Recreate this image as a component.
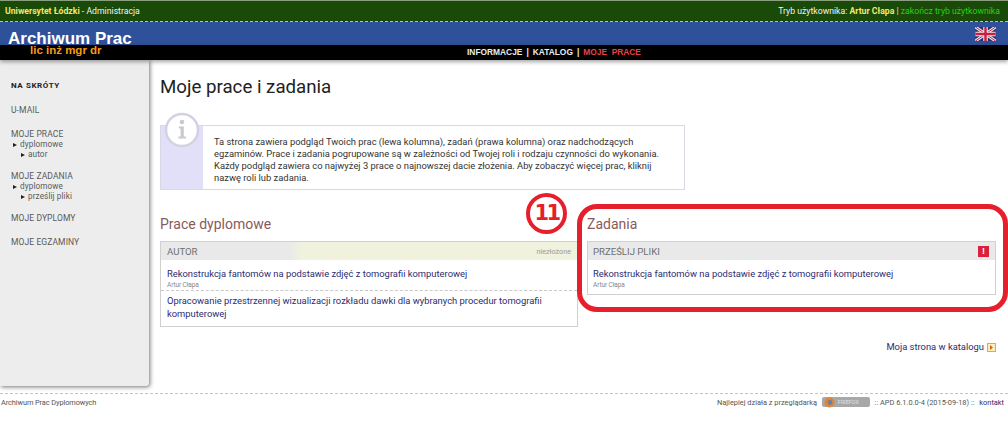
<div class="page">
  <header>
    <div class="topbar">
      <div><b class="uni">Uniwersytet Łódzki</b> - Administracja</div>
      <div>Tryb użytkownika: <b class="uni">Artur Cłapa</b> <span class="sep">|</span> <span class="green">zakończ tryb użytkownika</span></div>
    </div>
    <div class="blue">
      <span class="brand">Archiwum Prac</span>
      <svg class="flag" viewBox="0 0 20 14" width="21" height="14" aria-label="English">
        <rect width="20" height="14" rx="1.5" fill="#2b2f6e"/>
        <path d="M0 0L20 14M20 0L0 14" stroke="#e8e8f0" stroke-width="3"/>
        <path d="M0 0L20 14M20 0L0 14" stroke="#c8203c" stroke-width="1"/>
        <path d="M10 0V14M0 7H20" stroke="#e8e8f0" stroke-width="4.5"/>
        <path d="M10 0V14M0 7H20" stroke="#d01c3c" stroke-width="2.4"/>
      </svg>
    </div>
    <nav class="black">
      <span class="degrees">lic inż mgr dr</span>
      <span>INFORMACJE</span><span>|</span><span>KATALOG</span><span>|</span><span class="red">MOJE&nbsp; PRACE</span>
    </nav>
  </header>

  <div class="content">
    <aside>
      <div class="s-title">NA SKRÓTY</div>
      <div class="s-item">U-MAIL</div>
      <div class="s-group">
        <div class="s-item">MOJE PRACE</div>
        <div class="s-sub l1">dyplomowe</div>
        <div class="s-sub l2">autor</div>
      </div>
      <div class="s-group">
        <div class="s-item">MOJE ZADANIA</div>
        <div class="s-sub l1">dyplomowe</div>
        <div class="s-sub l2">prześlij pliki</div>
      </div>
      <div class="s-item">MOJE DYPLOMY</div>
      <div class="s-item">MOJE EGZAMINY</div>
    </aside>

    <main>
      <h1>Moje prace i zadania</h1>
      <div class="info">
        <div class="strip">
          <svg class="i-icon" width="38" height="38" viewBox="0 0 38 38">
            <circle cx="19" cy="18" r="16" fill="#fff" stroke="#d4d2e2" stroke-width="2.5"/>
            <circle cx="19" cy="10" r="2.3" fill="#c9c9d0"/>
            <path d="M15.8 14.5h5v10h2.2v2h-7.6v-2h2.2v-8h-1.8z" fill="#c9c9d0"/>
          </svg>
        </div>
        <p>Ta strona zawiera podgląd Twoich prac (lewa kolumna), zadań (prawa kolumna) oraz nadchodzących<br>egzaminów. Prace i zadania pogrupowane są w zależności od Twojej roli i rodzaju czynności do wykonania.<br>Każdy podgląd zawiera co najwyżej 3 prace o najnowszej dacie złożenia. Aby zobaczyć więcej prac, kliknij<br>nazwę roli lub zadania.</p>
      </div>

      <div class="cols">
        <section class="left">
          <h2>Prace dyplomowe</h2>
          <div class="panel">
            <div class="p-head graded"><span>AUTOR</span><span class="state">niezłożone</span></div>
            <div class="p-row dashed">
              <div class="link">Rekonstrukcja fantomów na podstawie zdjęć z tomografii komputerowej</div>
              <div class="author">Artur Cłapa</div>
            </div>
            <div class="p-row second">
              <div class="link">Opracowanie przestrzennej wizualizacji rozkładu dawki dla wybranych procedur tomografii<br>komputerowej</div>
            </div>
          </div>
        </section>
        <section class="right">
          <h2>Zadania</h2>
          <div class="panel">
            <div class="p-head"><span>PRZEŚLIJ PLIKI</span><span class="alert">!</span></div>
            <div class="p-row tall">
              <div class="link">Rekonstrukcja fantomów na podstawie zdjęć z tomografii komputerowej</div>
              <div class="author">Artur Cłapa</div>
            </div>
          </div>
          <div class="ring"></div>
          <div class="badge">11</div>
        </section>
      </div>

      <div class="catalog">
        <span>Moja strona w katalogu</span>
        <svg width="9" height="9" viewBox="0 0 9 9"><rect x=".5" y=".5" width="8" height="8" fill="#fbeeb8" stroke="#d8b040"/><path d="M3 2l3 2.5L3 7z" fill="#c96a10"/></svg>
      </div>
    </main>
  </div>

  <footer>
    <span>Archiwum Prac Dyplomowych</span>
    <span class="f-right">Najlepiej działa z przeglądarką
      <span class="ff"><svg width="11" height="11" viewBox="0 0 11 11"><circle cx="5.5" cy="5.5" r="5" fill="#e8832a"/><circle cx="6" cy="5.5" r="2.4" fill="#6a7fa8"/></svg><span>FIREFOX</span></span>
      :: APD 6.1.0.0-4 (2015-09-18) :: <span class="contact">kontakt</span></span>
  </footer>
</div>

<style>
  :global(body) { margin: 0; background: #fff; }
  .page { width: 1008px; height: 422px; overflow: hidden; font-family: Roboto, sans-serif; color: #333; }
  header { font-family: "Liberation Sans", sans-serif; }
  .topbar {
    height: 20px; display: flex; justify-content: space-between; align-items: center;
    padding: 0 8px 0 5px; background: #1a4a07; border-top: 1px solid #8a9f80;
    border-bottom: 1px dashed #b5c4ad; color: #f4f4f4; font-size: 8.7px; font-family: Roboto, sans-serif;
  }
  .uni { color: #f2e86a; font-weight: 700; }
  .sep { color: #f2e86a; }
  .green { color: #22d316; }
  .blue { height: 23px; background: #2f5199; display: flex; justify-content: space-between; padding: 0 12px 0 8px; }
  .brand { color: #fff; font-size: 17px; font-weight: 700; line-height: 34px; height: 23px; }
  .flag { margin-top: 5px; }
  .black {
    position: relative; height: 15px; background: #000; display: flex; justify-content: center; gap: 4px;
    padding-left: 100px; box-sizing: border-box; box-shadow: 0 2px 4px rgba(0,0,0,.35);
    color: #e8eef2; font-size: 8.4px; font-weight: 700; line-height: 14px;
  }
  .degrees { position: absolute; left: 30px; top: -2px; color: #f59a14; font-size: 11.5px; font-weight: 700; line-height: 14px; }
  .red { color: #e8404a; }

  .content { display: flex; height: 333px; }
  aside {
    width: 149px; height: 326px; box-sizing: border-box; background: #ededed; padding-top: 20px; padding-left: 11px;
    border-bottom-right-radius: 3px; box-shadow: 1px 1px 4px rgba(0,0,0,.55);
    color: #5a5a5a; font-size: 8.5px; letter-spacing: .1px;
  }
  .s-title { font-weight: 700; color: #222; font-size: 8px; letter-spacing: .6px; line-height: 12px; margin-bottom: 12px; }
  .s-item { line-height: 12px; margin-bottom: 12px; }
  .s-group { margin-bottom: 11px; }
  .s-group .s-item { margin-bottom: 0; }
  .s-sub { position: relative; line-height: 9.5px; font-size: 8.2px; }
  .s-sub::before { content: ""; position: absolute; top: 3px; border-left: 4px solid #222; border-top: 2.5px solid transparent; border-bottom: 2.5px solid transparent; }
  .l1 { padding-left: 9px; }
  .l1::before { left: 2px; }
  .l2 { padding-left: 17px; }
  .l2::before { left: 10px; }

  main { flex: 1; padding-left: 11px; padding-right: 12px; min-width: 0; }
  h1 { margin: 14px 0 0; font-size: 18.7px; font-weight: 400; line-height: 26px; color: #222; }
  .info {
    position: relative; margin-top: 25px; width: 525px; height: 65px; box-sizing: border-box; display: flex;
    border: 1px solid #d8d8e6;
  }
  .strip { width: 42px; background: #e2e0f8; flex: none; }
  .i-icon { position: absolute; left: 2px; top: -14px; }
  .info p { margin: 9.5px 0 0 11px; font-size: 9.4px; line-height: 12.2px; color: #333; white-space: nowrap; }

  .cols { display: flex; margin-top: 22px; gap: 9px; }
  .left { width: 418px; }
  .right { width: 409px; position: relative; }
  h2 { margin: 0; padding-top: 1px; font-size: 14px; font-weight: 400; line-height: 23px; color: #8a5a5a; }
  .panel { margin-top: 5px; border: 1px solid #d0d0d0; }
  .p-head {
    height: 18px; display: flex; justify-content: space-between; align-items: center; padding: 0 6px;
    background: #e9e9e9; color: #707070; font-size: 9.6px;
  }
  .right .p-head, .right .p-row { padding-left: 5px; }
  .graded { background: linear-gradient(90deg, #e9e9e9 0, #e9e9e9 128px, #f0f2de 140px, #f0f2de 100%); }
  .state { font-size: 7.2px; color: #999; }
  .alert {
    width: 11px; height: 11px; background: #d8223c; color: #fff; font: 700 9px/11px "Liberation Sans", sans-serif; text-align: center;
  }
  .p-row { padding: 8px 6px 0; }
  .dashed { height: 22px; border-bottom: 1px dashed #c8c8c8; }
  .second { height: 35px; box-sizing: border-box; padding-top: 4px; }
  .tall { height: 26px; }
  .link { color: #2c2c70; font-size: 9.4px; line-height: 12.5px; white-space: nowrap; }
  .author { color: #888; font-size: 6.5px; line-height: 8px; letter-spacing: -.1px; }
  .ring {
    position: absolute; left: -10px; top: -8px; width: 421px; height: 98px;
    border: 5px solid #e61f2c; border-radius: 20px; pointer-events: none;
  }
  .badge {
    position: absolute; left: -61px; top: -19px; width: 33px; height: 33px; border: 4px solid #e61f2c; border-radius: 50%;
    color: #e61f2c; font: 700 21px/33px "DejaVu Sans", sans-serif; text-align: center; letter-spacing: -2.5px; background: #fff;
  }
  .catalog { display: flex; justify-content: flex-end; align-items: center; gap: 3px; margin-top: 13px; color: #2c2c70; font-size: 9.4px; line-height: 14px; }

  footer {
    display: flex; justify-content: space-between; align-items: center; height: 17px; box-sizing: border-box;
    border-top: 1px dashed #c4c4c4; padding: 0 4px 0 1px; font-size: 7.4px; color: #555; letter-spacing: -.1px;
  }
  .f-right { display: flex; align-items: center; gap: 3px; white-space: pre; letter-spacing: 0; }
  .ff { display: inline-flex; align-items: center; gap: 3px; width: 48px; height: 10px; box-sizing: border-box; background: #a8a8a8; border-radius: 2px; padding-left: 2px; color: #e0e0e0; font-size: 5.5px; }
  .contact { color: #2c2c70; }
</style>
